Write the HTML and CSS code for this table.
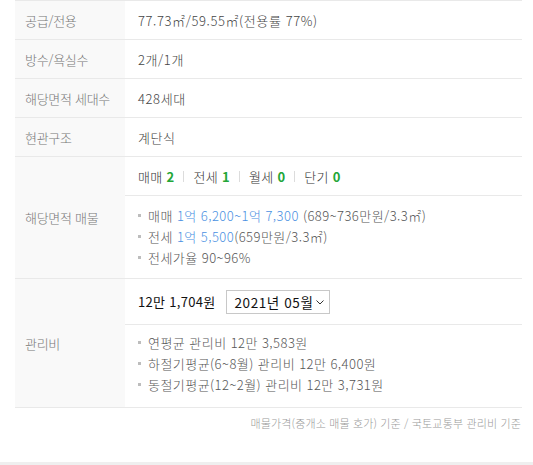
FILE: index.html
```html
<!DOCTYPE html>
<html lang="ko">
<head>
<meta charset="utf-8">
<link rel="stylesheet" href="styles.css">
</head>
<body>
<div class="page">
  <div class="table">
    <div class="row">
      <div class="th">공급/전용</div>
      <div class="td">77.73㎡/59.55㎡(전용률 77%)</div>
    </div>
    <div class="row">
      <div class="th">방수/욕실수</div>
      <div class="td">2개/1개</div>
    </div>
    <div class="row">
      <div class="th">해당면적 세대수</div>
      <div class="td">428세대</div>
    </div>
    <div class="row">
      <div class="th">현관구조</div>
      <div class="td">계단식</div>
    </div>
    <div class="row">
      <div class="th">해당면적 매물</div>
      <div class="tdgroup">
        <div class="sub counts">
          <span class="cnt">매매 <b>2</b></span><span class="sep"></span>
          <span class="cnt">전세 <b>1</b></span><span class="sep"></span>
          <span class="cnt">월세 <b>0</b></span><span class="sep"></span>
          <span class="cnt">단기 <b>0</b></span>
        </div>
        <ul class="sub list list-a">
          <li>매매 <span class="blue">1억 6,200~1억 7,300</span> (689~736만원/3.3㎡)</li>
          <li>전세 <span class="blue">1억 5,500</span>(659만원/3.3㎡)</li>
          <li>전세가율 90~96%</li>
        </ul>
      </div>
    </div>
    <div class="row">
      <div class="th">관리비</div>
      <div class="tdgroup">
        <div class="sub fee">
          <strong class="fee-amt">12만 1,704원</strong>
          <div class="select">2021년 05월<svg class="chev" width="8" height="5" viewBox="0 0 8 5"><path d="M0.5 0.5 L4 4 L7.5 0.5" fill="none" stroke="#333" stroke-width="1"/></svg></div>
        </div>
        <ul class="sub list list-b">
          <li>연평균 관리비 12만 3,583원</li>
          <li>하절기평균(6~8월) 관리비 12만 6,400원</li>
          <li>동절기평균(12~2월) 관리비 12만 3,731원</li>
        </ul>
      </div>
    </div>
  </div>
  <p class="note">매물가격(중개소 매물 호가) 기준 / 국토교통부 관리비 기준</p>
</div>
<div class="bottom-bar"></div>
</body>
</html>
```

FILE: styles.css
```css
html, body {
  margin: 0;
  padding: 0;
  background: #fff;
}
body {
  font-family: "Noto Sans CJK KR", "Noto Sans", sans-serif;
  font-size: 13px;
  color: #333;
  height: 465px;
  display: flex;
  flex-direction: column;
}
.page {
  flex: 1;
  padding: 0 11px 0 15px;
}
.table {
  border-top: 1px solid #e9e9e9;
}
.row {
  display: grid;
  grid-template-columns: 110px 1fr;
  border-bottom: 1px solid #e9e9e9;
}
.th {
  background: #f9f9f9;
  color: #777;
  padding-left: 10px;
  display: flex;
  align-items: center;
  letter-spacing: -0.3px;
  font-weight: 300;
}
.td {
  height: 38px;
  display: flex;
  align-items: center;
  padding-left: 13px;
  letter-spacing: 0.6px;
  font-weight: 300;
  color: #444;
}
.tdgroup {
  display: flex;
  flex-direction: column;
}
.sub {
  padding-left: 13px;
}
.counts {
  height: 38px;
  display: flex;
  align-items: center;
  border-bottom: 1px solid #e9e9e9;
  color: #333;
  letter-spacing: 0.3px;
  font-weight: 300;
}
.cnt b {
  color: #23a638;
  font-weight: 700;
}
.sep {
  display: inline-block;
  width: 1px;
  height: 11px;
  background: #dcdcdc;
  margin: 0 9px 0 9px;
}
.list {
  list-style: none;
  margin: 0;
  line-height: 21px;
  color: #555;
  letter-spacing: 0.45px;
  font-weight: 300;
}
.list li {
  position: relative;
  padding-left: 10px;
}
.list li::before {
  content: "";
  position: absolute;
  left: 0;
  top: 9px;
  width: 3px;
  height: 3px;
  background: #bdbdbd;
}
.list-a {
  padding-top: 9px;
  padding-bottom: 10px;
}
.list-b {
  padding-top: 7px;
  padding-bottom: 12px;
}
.blue {
  color: #4a90e2;
}
.fee {
  height: 45px;
  display: flex;
  align-items: center;
  gap: 11px;
  border-bottom: 1px solid #e9e9e9;
}
.fee-amt {
  font-weight: 400;
  color: #111;
  letter-spacing: 0.3px;
}
.select {
  height: 22px;
  border: 1px solid #c8c8c8;
  padding: 0 5px 0 7px;
  display: flex;
  align-items: center;
  gap: 3px;
  color: #111;
  font-weight: 400;
  font-size: 13.5px;
  letter-spacing: 0.6px;
}
.chev {
  margin-top: 1px;
}
.note {
  margin: 7px 0 0;
  text-align: right;
  font-size: 11px;
  color: #999;
  padding-right: 1px;
  letter-spacing: 0.15px;
  font-weight: 300;
}
.bottom-bar {
  height: 3px;
  background: #efefef;
}
```
